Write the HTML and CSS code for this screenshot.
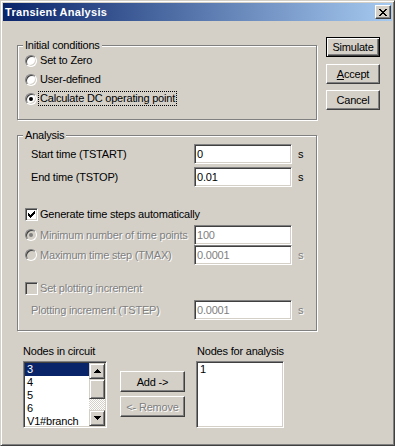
FILE: index.html
```html
<!DOCTYPE html>
<html lang="en">
<head>
    <meta charset="UTF-8">
    <title>Transient Analysis</title>
    <link rel="stylesheet" href="styles.css">
</head>
<body>
    <div class="window">
        <div class="titlebar">
            <span class="title">Transient Analysis</span>
            <span class="close-btn">
                <svg width="8" height="7" viewBox="0 0 8 7" shape-rendering="crispEdges">
                    <rect x="0" y="0" width="2" height="1"/><rect x="6" y="0" width="2" height="1"/>
                    <rect x="1" y="1" width="2" height="1"/><rect x="5" y="1" width="2" height="1"/>
                    <rect x="2" y="2" width="4" height="1"/>
                    <rect x="3" y="3" width="2" height="1"/>
                    <rect x="2" y="4" width="4" height="1"/>
                    <rect x="1" y="5" width="2" height="1"/><rect x="5" y="5" width="2" height="1"/>
                    <rect x="0" y="6" width="2" height="1"/><rect x="6" y="6" width="2" height="1"/>
                </svg>
            </span>
        </div>

        <div class="body">
            <div class="top">
                <div class="groups">
                    <!-- initial conditions -->
                    <div class="group group-init">
                        <span class="group-label">Initial conditions</span>
                        <div class="opt"><span class="radio"></span><span class="opt-text">Set to Zero</span></div>
                        <div class="opt"><span class="radio"></span><span class="opt-text">User-defined</span></div>
                        <div class="opt"><span class="radio on"></span><span class="opt-text focus">Calculate DC operating point</span></div>
                    </div>

                    <!-- analysis -->
                    <div class="group group-analysis">
                        <span class="group-label">Analysis</span>
                        <div class="field">
                            <span class="field-label">Start time (TSTART)</span>
                            <span class="edit">0</span>
                            <span class="unit">s</span>
                        </div>
                        <div class="field row-end">
                            <span class="field-label">End time (TSTOP)</span>
                            <span class="edit">0.01</span>
                            <span class="unit">s</span>
                        </div>
                        <div class="field row-gen">
                            <span class="check">
                                <svg width="7" height="7" viewBox="0 0 7 7" shape-rendering="crispEdges">
                                    <rect x="0" y="2" width="1" height="3"/><rect x="1" y="3" width="1" height="3"/>
                                    <rect x="2" y="4" width="1" height="3"/><rect x="3" y="3" width="1" height="3"/>
                                    <rect x="4" y="2" width="1" height="3"/><rect x="5" y="1" width="1" height="3"/>
                                    <rect x="6" y="0" width="1" height="3"/>
                                </svg>
                            </span>
                            <span class="opt-text">Generate time steps automatically</span>
                        </div>
                        <div class="field row-min">
                            <span class="field-opt"><span class="radio on off"></span><span class="opt-text dis">Minimum number of time points</span></span>
                            <span class="edit dis-edit">100</span>
                        </div>
                        <div class="field">
                            <span class="field-opt"><span class="radio off"></span><span class="opt-text dis">Maximum time step (TMAX)</span></span>
                            <span class="edit dis-edit">0.0001</span>
                            <span class="unit dis">s</span>
                        </div>
                        <div class="field row-setplot">
                            <span class="check off"></span>
                            <span class="opt-text dis">Set plotting increment</span>
                        </div>
                        <div class="field row-plotinc">
                            <span class="field-label dis">Plotting increment (TSTEP)</span>
                            <span class="edit dis-edit">0.0001</span>
                            <span class="unit dis">s</span>
                        </div>
                    </div>
                </div>

                <div class="actions">
                    <button class="btn btn-default">Simulate</button>
                    <button class="btn btn-accept"><u>A</u>ccept</button>
                    <button class="btn btn-cancel">Cancel</button>
                </div>
            </div>

            <div class="nodes">
                <div class="node-col">
                    <span class="node-label">Nodes in circuit</span>
                    <div class="listbox list-left">
                        <div class="items">
                            <div class="item sel">3</div>
                            <div class="item">4</div>
                            <div class="item">5</div>
                            <div class="item">6</div>
                            <div class="item">V1#branch</div>
                        </div>
                        <div class="sb">
                            <span class="sb-btn">
                                <svg width="7" height="4" viewBox="0 0 7 4" shape-rendering="crispEdges">
                                    <rect x="3" y="0" width="1" height="1"/><rect x="2" y="1" width="3" height="1"/>
                                    <rect x="1" y="2" width="5" height="1"/><rect x="0" y="3" width="7" height="1"/>
                                </svg>
                            </span>
                            <span class="sb-thumb"></span>
                            <span class="sb-track"></span>
                            <span class="sb-btn">
                                <svg width="7" height="4" viewBox="0 0 7 4" shape-rendering="crispEdges">
                                    <rect x="0" y="0" width="7" height="1"/><rect x="1" y="1" width="5" height="1"/>
                                    <rect x="2" y="2" width="3" height="1"/><rect x="3" y="3" width="1" height="1"/>
                                </svg>
                            </span>
                        </div>
                    </div>
                </div>

                <div class="mid">
                    <button class="btn btn-wide">Add -&gt;</button>
                    <button class="btn btn-wide btn-remove dis">&lt;- Remove</button>
                </div>

                <div class="node-col col-right">
                    <span class="node-label label-right">Nodes for analysis</span>
                    <div class="listbox list-right">
                        <div class="items">
                            <div class="item">1</div>
                        </div>
                    </div>
                </div>
            </div>
        </div>
    </div>
</body>
</html>
```

FILE: styles.css
```css
* {
    box-sizing: border-box;
}

body {
    margin: 0;
    background-color: #d4d0c8;
    font-family: "Liberation Sans", Arial, sans-serif;
    font-size: 11px;
    letter-spacing: -0.2px;
    color: #000;
}

/* window frame */
.window {
    width: 395px;
    height: 446px;
    padding: 2px;
    background-color: #d4d0c8;
    border: 1px solid;
    border-color: #d4d0c8 #404040 #404040 #d4d0c8;
    box-shadow: inset 1px 1px #fff, inset -1px -1px #808080;
}

.titlebar {
    height: 18px;
    display: flex;
    align-items: center;
    justify-content: space-between;
    padding: 0 1px 0 2px;
    background: linear-gradient(to right, #0a246a, #a6caf0);
}

.title {
    color: #fff;
    font-weight: bold;
    line-height: 13px;
    letter-spacing: 0.3px;
}

.close-btn {
    width: 16px;
    height: 14px;
    display: flex;
    align-items: center;
    justify-content: center;
    background-color: #d4d0c8;
    border: 1px solid;
    border-color: #fff #404040 #404040 #fff;
    box-shadow: inset -1px -1px #808080;
}

.body {
    padding-left: 14px;
}

.top {
    display: flex;
    align-items: flex-start;
}

.groups {
    width: 300px;
    margin-top: 24px;
}

/* etched group box */
.group {
    position: relative;
    border: 1px solid #808080;
    box-shadow: inset 1px 1px #fff, 1px 1px #fff;
}

.group-label {
    position: absolute;
    left: 5px;
    top: -7px;
    padding: 0 2px;
    line-height: 13px;
    background-color: #d4d0c8;
}

.group-init {
    height: 75px;
    padding: 5px 0 0 7px;
}

.group-analysis {
    height: 196px;
    margin-top: 15px;
    padding: 8px 0 0 7px;
}

.opt {
    display: flex;
    align-items: center;
    height: 19px;
}

.opt-text {
    margin-left: 1px;
    padding: 0 1px;
    line-height: 13px;
    border: 1px solid transparent;
    white-space: nowrap;
}

.opt-text.focus {
    border: 1px dotted #000;
}

.radio {
    position: relative;
    flex-shrink: 0;
    width: 12px;
    height: 12px;
    border-radius: 50%;
    background-color: #fff;
    border: 1px solid;
    border-color: #808080 #fff #fff #808080;
    box-shadow: inset 1px 1px #404040, inset -1px -1px #d4d0c8;
}

.radio.on::after {
    content: "";
    position: absolute;
    left: 3px;
    top: 3px;
    width: 4px;
    height: 4px;
    border-radius: 50%;
    background-color: #000;
}

.radio.off {
    background-color: #d4d0c8;
}

.radio.on.off::after {
    background-color: #808080;
}

.check {
    flex-shrink: 0;
    width: 13px;
    height: 13px;
    display: flex;
    align-items: center;
    justify-content: center;
    background-color: #fff;
    border: 1px solid;
    border-color: #808080 #fff #fff #808080;
    box-shadow: inset 1px 1px #404040, inset -1px -1px #d4d0c8;
}

.check.off {
    background-color: #d4d0c8;
}

.check + .opt-text {
    margin-left: 0;
}

.dis {
    color: #808080;
    text-shadow: 1px 1px #fff;
}

.field {
    display: flex;
    align-items: center;
    height: 20px;
}

.field-label {
    width: 169px;
    padding-left: 6px;
    flex-shrink: 0;
}

.field-opt {
    width: 169px;
    flex-shrink: 0;
    display: flex;
    align-items: center;
}

.row-end { margin-top: 3px; }
.row-gen { margin-top: 17px; }
.row-min { margin-top: 1px; }
.row-setplot { margin-top: 13px; }
.row-plotinc { margin-top: 2px; }

.edit {
    width: 98px;
    height: 20px;
    display: flex;
    align-items: center;
    padding: 0 2px;
    background-color: #fff;
    border: 1px solid;
    border-color: #808080 #fff #fff #808080;
    box-shadow: inset 1px 1px #404040, inset -1px -1px #d4d0c8;
}

.dis-edit {
    color: #808080;
}

.unit {
    margin-left: 6px;
}

/* buttons */
.actions {
    display: flex;
    flex-direction: column;
    margin: 16px 0 0 9px;
}

.btn {
    width: 54px;
    height: 20px;
    padding: 0;
    font: inherit;
    letter-spacing: inherit;
    color: #000;
    background-color: #d4d0c8;
    border: 1px solid;
    border-color: #fff #404040 #404040 #fff;
    box-shadow: inset -1px -1px #808080;
}

.btn-default {
    border-color: #000;
    box-shadow: inset 1px 1px #fff, inset -1px -1px #404040, inset -2px -2px #808080;
}

.btn-accept { margin-top: 7px; }
.btn-cancel { margin-top: 6px; }

.btn-wide {
    width: 65px;
    height: 21px;
}

.btn-remove {
    margin-top: 4px;
    color: #808080;
}

/* node lists */
.nodes {
    display: flex;
    margin: 14px 0 0 6px;
}

.node-col {
    display: flex;
    flex-direction: column;
}

.node-label {
    height: 13px;
    line-height: 13px;
    margin-bottom: 3px;
}

.label-right {
    padding-left: 1px;
}

.listbox {
    display: flex;
    height: 67px;
    padding: 1px;
    background-color: #fff;
    border: 1px solid;
    border-color: #808080 #fff #fff #808080;
    box-shadow: inset 1px 1px #404040, inset -1px -1px #d4d0c8;
}

.list-left { width: 84px; }
.list-right { width: 88px; }

.items {
    flex: 1;
    overflow: hidden;
}

.item {
    height: 13px;
    line-height: 13px;
    padding-left: 2px;
    white-space: nowrap;
}

.item.sel {
    background-color: #0a246a;
    color: #fff;
}

.sb {
    width: 16px;
    display: flex;
    flex-direction: column;
}

.sb-btn, .sb-thumb {
    display: flex;
    align-items: center;
    justify-content: center;
    background-color: #d4d0c8;
    border: 1px solid;
    border-color: #d4d0c8 #404040 #404040 #d4d0c8;
    box-shadow: inset 1px 1px #fff, inset -1px -1px #808080;
}

.sb-btn { height: 16px; }
.sb-thumb { height: 20px; }

.sb-track {
    flex: 1;
    background: repeating-conic-gradient(#fff 0 25%, #d4d0c8 0 50%) 0 0 / 2px 2px;
}

.mid {
    display: flex;
    flex-direction: column;
    margin-left: 13px;
    padding-top: 26px;
}

.col-right {
    margin-left: 11px;
}
```
